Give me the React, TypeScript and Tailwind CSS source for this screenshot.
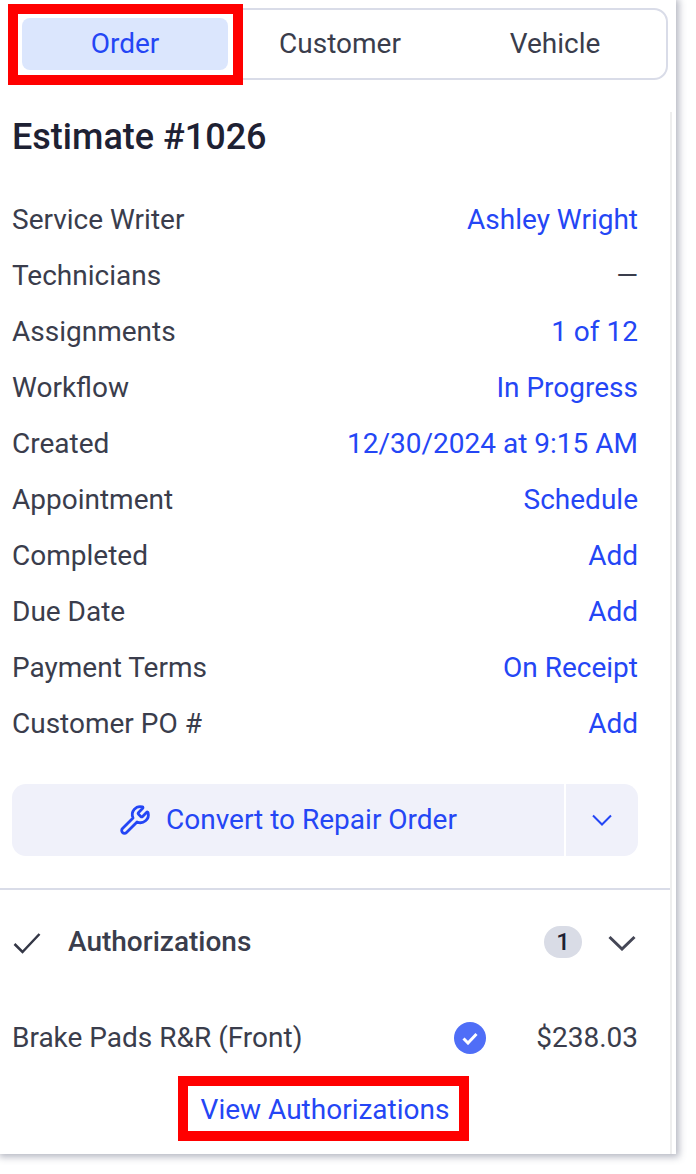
import { Wrench } from "lucide-react";

const rows: [string, string][] = [
  ["Service Writer", "Ashley Wright"],
  ["Technicians", "—"],
  ["Assignments", "1 of 12"],
  ["Workflow", "In Progress"],
  ["Created", "12/30/2024 at 9:15 AM"],
  ["Appointment", "Schedule"],
  ["Completed", "Add"],
  ["Due Date", "Add"],
  ["Payment Terms", "On Receipt"],
  ["Customer PO #", "Add"],
];

export default function App() {
  return (
    <div className="h-[1174px] w-[696px] overflow-hidden bg-white font-['Roboto',sans-serif] text-[28px] text-[#3a3d4c]">
      <div className="relative h-[1154px] w-[676px] bg-white shadow-[1px_1px_7px_2px_rgba(90,95,120,0.45)]">
        {/* tabs */}
        <div className="pl-[8px] pt-[8px]">
          <div className="flex h-[72px] w-[660px] items-center rounded-[14px] border-2 border-[#d9dce8] pl-[12px]">
            <div className="flex h-[52px] w-[206px] shrink-0 items-center justify-center rounded-[8px] bg-[#dbe6fd] text-[#2446f5]">
              Order
            </div>
            <div className="flex h-[52px] w-[224px] shrink-0 items-center justify-center">Customer</div>
            <div className="flex h-[52px] w-[206px] shrink-0 items-center justify-center">Vehicle</div>
          </div>
        </div>

        <div className="mt-[32px] mr-[4px] h-[1042px] border-r-2 border-[#eeeeee]">
          <div className="pl-[12px] pr-[32px]">
            <h1 className="text-[36px] leading-[50px] font-medium text-[#1e2133]">Estimate #1026</h1>
            <div className="mt-[30px]">
              {rows.map(([label, value]) => (
                <div key={label} className="flex h-[56px] items-center justify-between">
                  <span>{label}</span>
                  <span className={value === "—" ? "" : "text-[#2446f5]"}>{value}</span>
                </div>
              ))}
            </div>
            <div className="mt-[32px] flex h-[72px] overflow-hidden rounded-[14px] bg-[#f0f1fa] text-[#2446f5]">
              <div className="flex w-[552px] items-center justify-center gap-[15px]">
                <Wrench size={32} strokeWidth={2.1} />
                <span>Convert to Repair Order</span>
              </div>
              <div className="w-[2px] bg-white" />
              <div className="flex flex-1 items-center justify-center">
                <svg width="20" height="12" viewBox="0 0 20 12" fill="none" stroke="currentColor" strokeWidth="2">
                  <path d="M1 1.5 10 10.5 19 1.5" />
                </svg>
              </div>
            </div>
          </div>

          <div className="mt-[32px] h-[2px] bg-[#d9dce8]" />

          <div className="pl-[12px] pr-[32px]">
            <div className="mt-[36px] flex h-[32px] items-center">
              <svg className="ml-[1px] mt-[2px]" width="28" height="22" viewBox="0 0 28 22" fill="none" stroke="#343746" strokeWidth="2.5">
                <path d="M1.5 12 9.5 20 26.5 2" />
              </svg>
              <span className="ml-[27px] font-medium">Authorizations</span>
              <span className="ml-auto flex h-[32px] w-[38px] items-center justify-center rounded-full bg-[#d9dce6] text-[24px] font-medium text-[#1e2133]">
                1
              </span>
              <svg className="ml-[26px] mr-[2px] mt-[2px]" width="28" height="16" viewBox="0 0 28 16" fill="none" stroke="#454756" strokeWidth="3">
                <path d="M1.5 2 14 14 26.5 2" />
              </svg>
            </div>

            <div className="mt-[58px] flex h-[44px] items-center">
              <span>Brake Pads R&amp;R (Front)</span>
              <span className="ml-auto flex h-[32px] w-[32px] items-center justify-center rounded-full bg-[#4f6ef7]">
                <svg width="16" height="13" viewBox="0 0 16 13" fill="none" stroke="white" strokeWidth="3">
                  <path d="M1.5 6.5 6 11 14.5 2" />
                </svg>
              </span>
              <span className="ml-[50px]">$238.03</span>
            </div>

            <div className="mt-[28px] flex justify-center text-[#2446f5]">
              <span className="relative flex h-[44px] items-center">
                View Authorizations
                <span className="absolute -left-[23px] -right-[20px] -top-[12px] -bottom-[9px] border-[10px] border-[#ff0000]" />
              </span>
            </div>
          </div>
        </div>

        {/* annotation over Order tab */}
        <div className="absolute left-[8px] top-[4px] h-[81px] w-[235px] border-[10px] border-[#ff0000]" />
      </div>
    </div>
  );
}
